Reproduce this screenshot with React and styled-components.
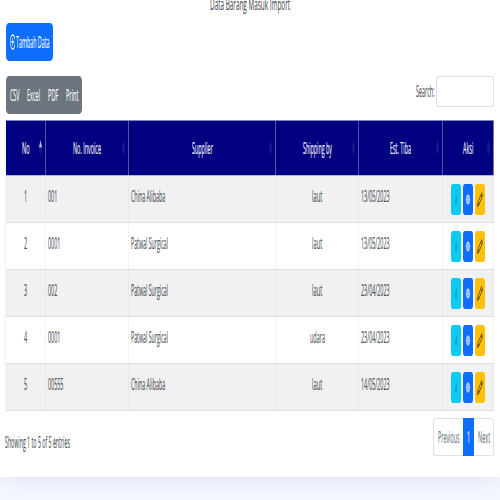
import React, { useLayoutEffect, useRef, useState } from "react";
import styled, { createGlobalStyle } from "styled-components";

const Global = createGlobalStyle`
  * { box-sizing: border-box; }
  html, body { margin: 0; height: 500px; overflow: hidden; background: #f3f7ff; }
  body { font-family: "Open Sans", "Noto Sans", sans-serif; font-size: 15.7px; line-height: 24px; color: #4a4f54; }
`;

const Card = styled.main`
  width: 500px;
  height: 477px;
  padding: 0 6px 0 5px;
  background: #fff;
  box-shadow: 0 0 22px rgba(1, 41, 112, 0.1);
  display: flex;
  flex-direction: column;
`;

const FitBox = styled.span`
  display: inline-block;
  flex: none;
  width: ${(p) => p.$w}px;
  white-space: nowrap;
  text-align: left;
  vertical-align: top;
`;

const FitText = styled.span`
  display: inline-block;
  transform-origin: 0 50%;
  -webkit-text-stroke: 0.12px currentColor;
`;

/* Condenses a run of text horizontally to the given width. */
function Fit({ w, children }) {
  const ref = useRef(null);
  const [scale, setScale] = useState(0.35);
  useLayoutEffect(() => {
    setScale(w / ref.current.offsetWidth);
  }, [w, children]);
  return (
    <FitBox $w={w}>
      <FitText ref={ref} style={{ transform: `scaleX(${scale})` }}>{children}</FitText>
    </FitBox>
  );
}

const Title = styled.h1`
  margin: -8px 0 0;
  height: 31px;
  padding-left: 1px;
  display: flex;
  justify-content: center;
  font-size: 16.5px;
  font-weight: 400;
  line-height: 24px;
`;

const AddButton = styled.button`
  width: 47.5px;
  height: 38px;
  flex: none;
  margin-left: 0.5px;
  padding: 0 0 1px 4px;
  border: 0;
  border-radius: 3px / 5px;
  background: #0d6efd;
  color: #fff;
  font: inherit;
  display: flex;
  align-items: center;
  gap: 1px;
  svg { width: 5.5px; height: 16px; flex: none; }
`;

const Tools = styled.div`
  margin-top: 15px;
  height: 38px;
  flex: none;
  display: flex;
  justify-content: space-between;
`;

const ButtonGroup = styled.div`
  width: 76.5px;
  margin-left: 0.5px;
  padding: 0 4px 0 4.5px;
  border-radius: 3px / 5px;
  background: #6c757d;
  color: #fff;
  display: flex;
  align-items: center;
  justify-content: space-between;
`;

const Search = styled.label`
  display: flex;
  height: 31px;
  align-items: center;
  gap: 2px;
`;

const SearchText = styled.span`
  height: 26px;
`;

const SearchInput = styled.input`
  width: 58px;
  height: 31px;
  border: 1px solid #dbe0e5;
  border-radius: 2px / 4px;
  padding: 0 3px;
  background: #fff;
  outline: 0;
`;

const Table = styled.div`
  margin-top: 6px;
  flex: none;
  border-left: 1px solid #f2f2f4;
`;

const cols = "40px 83px 147px 83px 84px 51px";

const HeadRow = styled.div`
  display: grid;
  grid-template-columns: ${cols};
  height: 56px;
  background: #000080;
  border-top: 1px solid #8080c0;
  border-bottom: 1px solid #b5b5da;
  color: #fff;
`;

const HeadCell = styled.div`
  display: flex;
  align-items: center;
  justify-content: center;
  position: relative;
  border-right: 1px solid ${(p) => (p.$last ? "#7474b8" : "#5656a8")};
`;

const SortIcon = styled.svg`
  position: absolute;
  right: 3px;
  top: 19px;
  width: 3px;
  height: 16px;
`;

const Row = styled.div`
  display: grid;
  grid-template-columns: ${cols};
  height: 47px;
  background: ${(p) => (p.$odd ? "#f1f1f1" : "#fff")};
  border-bottom: 1px solid #dddfe1;
`;

const Cell = styled.div`
  display: flex;
  align-items: flex-start;
  justify-content: ${(p) => (p.$center ? "center" : "flex-start")};
  padding: 8px 0 0 ${(p) => (p.$center ? "0.5px" : "2.2px")};
  border-right: 1px solid rgba(200, 204, 212, 0.22);
`;

const Actions = styled(Cell)`
  justify-content: flex-start;
  gap: 2px;
  padding: 8px 0 0 8px;
`;

const Action = styled.button`
  width: 10px;
  height: 31px;
  padding: 0;
  border: 0;
  border-radius: 2px / 4px;
  background: ${(p) => p.$bg};
  display: flex;
  align-items: center;
  justify-content: center;
  svg { width: 6px; height: 15px; }
`;

const Footer = styled.footer`
  display: flex;
  justify-content: space-between;
  padding-top: 7px;
`;

const Info = styled.div`
  padding: 12px 0 0 0.3px;
`;

const Pager = styled.nav`
  width: 61px;
  height: 38px;
  display: flex;
`;

const Page = styled.div`
  width: ${(p) => p.$w}px;
  display: flex;
  align-items: center;
  justify-content: center;
  border: 1px solid ${(p) => (p.$active ? "#0d6efd" : "#dee2e6")};
  border-radius: ${(p) => p.$radius || 0};
  border-left-width: ${(p) => (p.$end ? 0 : 1)}px;
  border-right-width: ${(p) => (p.$start ? 0 : 1)}px;
  background: ${(p) => (p.$active ? "#0d6efd" : "#fff")};
  color: ${(p) => (p.$active ? "#fff" : "#6c757d")};
`;

const PlusCircle = () => (
  <svg viewBox="0 0 16 16" preserveAspectRatio="none" fill="none" stroke="#fff">
    <circle cx="8" cy="8" r="7.1" strokeWidth="1.5" />
    <path d="M8 4v8M4 8h8" strokeWidth="1.5" />
  </svg>
);

const InfoIcon = () => (
  <svg viewBox="0 0 16 16" preserveAspectRatio="none" fill="#0a5f75">
    <path d="M6.7 6.7 9.5 6.3 8.5 11.5q0 .8 1 .3l-.2.8q-3 1.1-2.4-1.5l.8-3.7-1.1-.2z" />
    <circle cx="8.6" cy="4.3" r="1" />
  </svg>
);

const GlobeIcon = () => (
  <svg viewBox="0 0 16 16" preserveAspectRatio="none" fill="#a9cbff">
    <path d="M8 2.5c3.5 0 5 2.5 6 5.5-1 3-2.5 5.5-6 5.5S3 11 2 8c1-3 2.5-5.5 6-5.5z" />
    <path d="M2 6.5h12M2 9.6h12" stroke="#4b91fa" strokeWidth=".8" />
  </svg>
);

const PencilIcon = () => (
  <svg viewBox="0 0 16 16" preserveAspectRatio="none" fill="none" stroke="#594613" strokeWidth="1.5">
    <path d="M12.3 1 15 3.7 5 13.7 1 15l1.3-4zM10.3 3l2.7 2.7M2.5 11l2.5 2.5" />
  </svg>
);

const heads = [
  ["No", 7.5],
  ["No. Invoice", 28],
  ["Supplier", 21],
  ["Shipping by", 29],
  ["Est. Tiba", 21],
  ["Aksi", 10.5],
];

const rows = [
  ["1", "001", "China Alibaba", "laut", "13/05/2023"],
  ["2", "0001", "Patwal Surgical", "laut", "13/05/2023"],
  ["3", "002", "Patwal Surgical", "laut", "23/04/2023"],
  ["4", "0001", "Patwal Surgical", "udara", "23/04/2023"],
  ["5", "00555", "China Alibaba", "laut", "14/05/2023"],
];

const supplierWidth = { "China Alibaba": 34, "Patwal Surgical": 37 };
const shippingWidth = { laut: 10.3, udara: 15 };

export default function App() {
  return (
    <>
      <Global />
      <Card>
        <Title><Fit w={80}>Data Barang Masuk Import</Fit></Title>
        <AddButton><PlusCircle /><Fit w={33.5}>Tambah Data</Fit></AddButton>
        <Tools>
          <ButtonGroup>
            <Fit w={9.5}>CSV</Fit>
            <Fit w={13}>Excel</Fit>
            <Fit w={10.5}>PDF</Fit>
            <Fit w={12.5}>Print</Fit>
          </ButtonGroup>
          <Search><SearchText><Fit w={18.5}>Search:</Fit></SearchText><SearchInput aria-label="Search" /></Search>
        </Tools>
        <Table>
          <HeadRow>
            {heads.map(([name, w], i) => (
              <HeadCell key={name} $last={i === 5}>
                <Fit w={w}>{name}</Fit>
                <SortIcon viewBox="0 0 4 17" preserveAspectRatio="none">
                  <path d="M0 8 2 0l2 8z" fill={i === 0 ? "#c4c4e6" : "#1d1d92"} />
                  <path d="M0 9 2 16l2-7z" fill="#1d1d92" />
                </SortIcon>
              </HeadCell>
            ))}
          </HeadRow>
          {rows.map(([no, invoice, supplier, shipping, date], i) => (
            <Row key={no} $odd={i % 2 === 0}>
              <Cell $center><Fit w={3.2}>{no}</Fit></Cell>
              <Cell><Fit w={invoice.length * 3.1}>{invoice}</Fit></Cell>
              <Cell><Fit w={supplierWidth[supplier]}>{supplier}</Fit></Cell>
              <Cell $center><Fit w={shippingWidth[shipping]}>{shipping}</Fit></Cell>
              <Cell><Fit w={28.5}>{date}</Fit></Cell>
              <Actions>
                <Action $bg="#0dcaf0" aria-label="Info"><InfoIcon /></Action>
                <Action $bg="#0d6efd" aria-label="View"><GlobeIcon /></Action>
                <Action $bg="#ffc107" aria-label="Edit"><PencilIcon /></Action>
              </Actions>
            </Row>
          ))}
        </Table>
        <Footer>
          <Info><Fit w={65}>Showing 1 to 5 of 5 entries</Fit></Info>
          <Pager>
            <Page $w={30} $start $radius="3px 0 0 3px"><Fit w={21.5}>Previous</Fit></Page>
            <Page $w={11} $active><Fit w={3.2}>1</Fit></Page>
            <Page $w={20} $end $radius="0 3px 3px 0"><Fit w={12}>Next</Fit></Page>
          </Pager>
        </Footer>
      </Card>
    </>
  );
}
